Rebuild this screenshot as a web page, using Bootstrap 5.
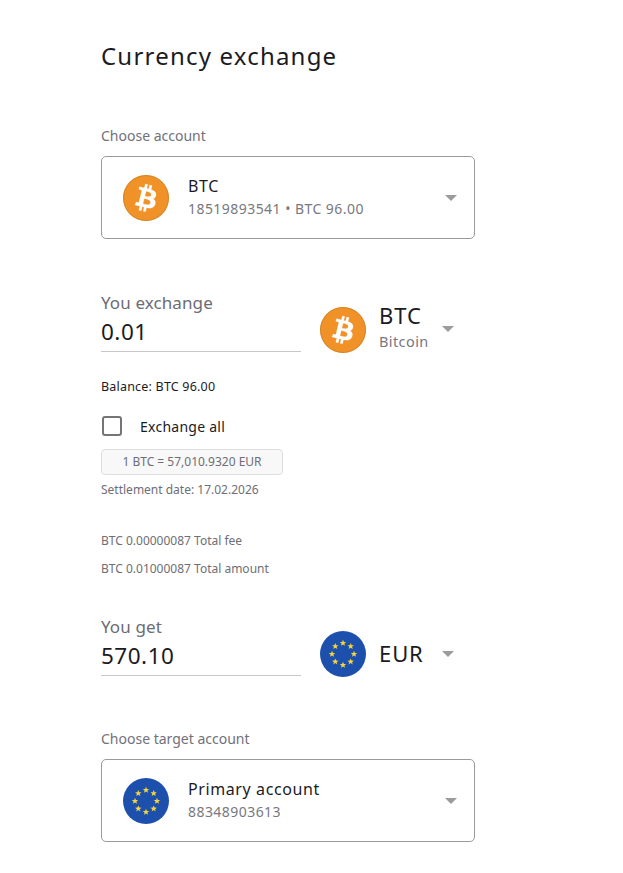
<!DOCTYPE html>
<html lang="en"><head><meta charset="utf-8"><title>Currency exchange</title>
<link href="https://cdn.jsdelivr.net/npm/bootstrap@5.3.0/dist/css/bootstrap.min.css" rel="stylesheet">
<style>
body{font-family:"Noto Sans",sans-serif;color:#1b1b1f;background:#fff;font-size:14.5px}
.page-wrap{width:374px;margin-left:101px}
.page-title{font-size:24px;font-weight:400;letter-spacing:1.2px;line-height:32px;margin:0;padding-top:40px}
.field-label{font-size:14px;line-height:20px;color:#71717a}
.first-label{margin-top:54px}
.acct-box{height:83px;margin-top:10px;border:1px solid #9a9a9a;border-radius:5px;padding:0 17px 0 21px;background:#fff}
.coin{width:46px;height:46px;flex:none;display:block}
.acct-text{margin-left:19px;flex:1;padding-bottom:2px}
.acct-name{font-size:16px;line-height:22px;letter-spacing:.6px}
.acct-sub{font-size:14px;line-height:20px;margin-top:2px;color:#787880;letter-spacing:.45px}
.caret-mark{width:0;height:0;border-left:6px solid transparent;border-right:6px solid transparent;border-top:6px solid #9b9b9b;flex:none}
.amount-col{width:200px;border-bottom:1px solid #c8c8c8;height:61px}
.amount-label{font-size:17px;line-height:24px;color:#6c6c74;letter-spacing:.1px}
.amount-input{border:0;padding:1px 0 0;border-radius:0;font-size:22.5px;line-height:32px;letter-spacing:.5px;color:#1b1b1f;background:transparent;box-shadow:none}
.pick-coin{margin:16px 0 0 19px}
.pick-text{margin:11px 0 0 13px;width:57px}
.pick-code{font-size:22px;line-height:26px;letter-spacing:.9px}
.pick-name{font-size:14.5px;line-height:20px;margin-top:3px;color:#787880;letter-spacing:.4px}
.pick-caret{margin:35px 0 0 6px}
.sec-exchange{margin-top:52px}
.balance{font-size:12.5px;line-height:16px;margin-top:26px;letter-spacing:.2px}
.check-row{margin-top:21px;height:20px;padding-left:1px}
.check-row .form-check-input{width:20px;height:20px;margin:0;border:2px solid #757575;border-radius:3px;flex:none}
.check-row label{margin-left:18px;font-size:14px;letter-spacing:.25px}
.rate-box{width:182px;height:26px;margin-top:13px;border:1px solid #dedede;border-radius:4px;background:#f8f8f8;font-size:12px;color:#6e6e76;line-height:24px;text-align:center}
.small-note{font-size:12px;line-height:16px;color:#6e6e76}
.note-a{margin-top:7px}.note-b{margin-top:35px}.note-c{margin-top:12px}
.sec-get{margin-top:38px}
.eur-text{margin-top:25px}
.eur-caret{margin-top:36px}
.target-label{margin-top:52px}
</style></head>
<body>
<svg width="0" height="0" class="d-block position-absolute">
<defs>
<symbol id="btc" viewBox="0 0 46 46"><circle cx="23" cy="23" r="23" fill="#f09228"/><circle cx="23" cy="23" r="22.5" fill="none" stroke="#b87425" stroke-width=".5"/><path transform="translate(.5 .5) scale(1.4)" fill="#fff" stroke="#fff" stroke-width=".15" d="M23.189 14.02c.314-2.096-1.283-3.223-3.465-3.975l.708-2.84-1.728-.43-.69 2.765c-.454-.114-.92-.22-1.385-.326l.695-2.783L15.596 6l-.708 2.839c-.376-.086-.746-.17-1.104-.26l.002-.009-2.384-.595-.46 1.846s1.283.294 1.256.312c.7.175.826.638.805 1.006l-.806 3.235c.048.012.11.03.18.057l-.183-.045-1.13 4.532c-.086.212-.303.531-.793.41.018.025-1.256-.313-1.256-.313l-.858 1.978 2.25.561c.418.105.828.215 1.231.318l-.715 2.872 1.727.43.708-2.84c.472.127.93.245 1.378.357l-.706 2.828 1.728.43.715-2.866c2.948.558 5.164.333 6.097-2.333.752-2.146-.037-3.385-1.588-4.192 1.13-.26 1.98-1.003 2.207-2.538zm-3.95 5.538c-.533 2.147-4.148.986-5.32.695l.95-3.805c1.172.293 4.929.872 4.37 3.11zm.535-5.569c-.487 1.953-3.495.96-4.47.717l.86-3.45c.975.243 4.118.696 3.61 2.733z"/></symbol>
<polygon id="st" points="0,-3.3 .9,-1.1 3.2,-1 1.4,.45 2,2.75 0,1.4 -2,2.75 -1.4,.45 -3.2,-1 -.9,-1.1" fill="#f6d43c"/>
<symbol id="eur" viewBox="0 0 46 46"><circle cx="23" cy="23" r="23" fill="#1c50ac"/>
<use href="#st" x="23" y="12"/><use href="#st" x="30.7" y="15.3"/><use href="#st" x="34" y="23"/><use href="#st" x="30.7" y="30.7"/><use href="#st" x="23" y="34"/><use href="#st" x="15.3" y="30.7"/><use href="#st" x="12" y="23"/><use href="#st" x="15.3" y="15.3"/></symbol>
</defs></svg>

<main class="page-wrap">
<h1 class="page-title">Currency exchange</h1>

<div class="field-label first-label">Choose account</div>
<div class="acct-box d-flex align-items-center">
<svg class="coin"><use href="#btc"/></svg>
<div class="acct-text"><div class="acct-name">BTC</div><div class="acct-sub">18519893541 • BTC 96.00</div></div>
<span class="caret-mark"></span>
</div>

<div class="d-flex align-items-start sec-exchange">
<div class="amount-col"><div class="amount-label">You exchange</div><input class="form-control amount-input" value="0.01" aria-label="You exchange"></div>
<svg class="coin pick-coin"><use href="#btc"/></svg>
<div class="pick-text"><div class="pick-code">BTC</div><div class="pick-name">Bitcoin</div></div>
<span class="caret-mark pick-caret"></span>
</div>

<div class="balance">Balance: BTC 96.00</div>
<div class="check-row d-flex align-items-center"><input class="form-check-input" type="checkbox" id="ea"><label for="ea">Exchange all</label></div>
<div class="rate-box">1 BTC = 57,010.9320 EUR</div>
<div class="small-note note-a">Settlement date: 17.02.2026</div>
<div class="small-note note-b">BTC 0.00000087 Total fee</div>
<div class="small-note note-c">BTC 0.01000087 Total amount</div>

<div class="d-flex align-items-start sec-get">
<div class="amount-col"><div class="amount-label">You get</div><input class="form-control amount-input" value="570.10" aria-label="You get"></div>
<svg class="coin pick-coin"><use href="#eur"/></svg>
<div class="pick-text eur-text"><div class="pick-code">EUR</div></div>
<span class="caret-mark pick-caret eur-caret"></span>
</div>

<div class="field-label target-label">Choose target account</div>
<div class="acct-box d-flex align-items-center">
<svg class="coin"><use href="#eur"/></svg>
<div class="acct-text"><div class="acct-name">Primary account</div><div class="acct-sub">88348903613</div></div>
<span class="caret-mark"></span>
</div>
</main>
<script src="https://cdn.jsdelivr.net/npm/bootstrap@5.3.0/dist/js/bootstrap.bundle.min.js"></script>
</body></html>
